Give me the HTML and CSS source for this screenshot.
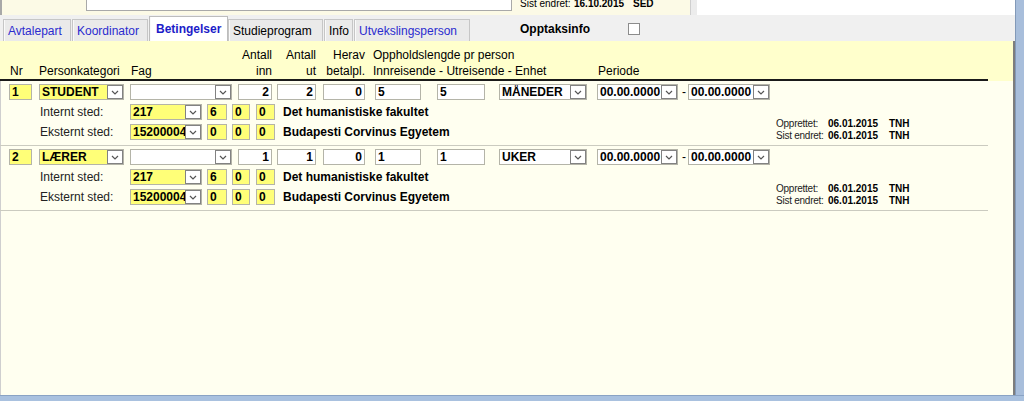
FILE: index.html
```html
<!DOCTYPE html>
<html lang="no">
<head>
<meta charset="utf-8">
<title>Betingelser</title>
<link rel="stylesheet" href="styles.css">
</head>
<body>
<div class="app">
  <div class="main">
    <div class="topstrip">
      <div class="ts-cream">
        <div class="ts-box"></div>
        <div class="ts-meta"><span class="tm-lbl">Sist endret:</span><b class="tm-dt">16.10.2015</b><b>SED</b></div>
      </div>
      <div class="ts-gap"></div>
      <div class="ts-white"></div>
    </div>

    <div class="tabbar">
      <div class="tabs">
        <div class="tab t1 link">Avtalepart</div>
        <div class="tab t2 link">Koordinator</div>
        <div class="tab t3 active">Betingelser</div>
        <div class="tab t4">Studieprogram</div>
        <div class="tab t5">Info</div>
        <div class="tab t6 link">Utvekslingsperson</div>
      </div>
      <div class="opptak"><b>Opptaksinfo</b><span class="chk"></span></div>
    </div>

    <div class="content">
      <div class="hdr">
        <div class="hdr-in">
          <div class="h h-nr">Nr</div>
          <div class="h h-pk">Personkategori</div>
          <div class="h h-fag">Fag</div>
          <div class="h h-inn">Antall<br>inn</div>
          <div class="h h-ut">Antall<br>ut</div>
          <div class="h h-her">Herav<br>betalpl.</div>
          <div class="h h-opp">Oppholdslengde pr person<br>Innreisende - Utreisende - Enhet</div>
          <div class="h h-per">Periode</div>
        </div>
      </div>

      <div class="row">
        <div class="line1">
          <div class="fld y c-nr">1</div>
          <div class="sel c-pk"><span class="val y">STUDENT</span><span class="btn"><svg width="8" height="5" viewBox="0 0 8 5"><polyline points="1,1 4,4 7,1" fill="none" stroke="#555" stroke-width="1.2"/></svg></span></div>
          <div class="sel c-fag"><span class="val"></span><span class="btn"><svg width="8" height="5" viewBox="0 0 8 5"><polyline points="1,1 4,4 7,1" fill="none" stroke="#555" stroke-width="1.2"/></svg></span></div>
          <div class="fld r c-inn">2</div>
          <div class="fld r c-ut">2</div>
          <div class="fld r c-her">0</div>
          <div class="fld c-ir">5</div>
          <div class="fld c-ur">5</div>
          <div class="sel c-enh"><span class="val">MÅNEDER</span><span class="btn"><svg width="8" height="5" viewBox="0 0 8 5"><polyline points="1,1 4,4 7,1" fill="none" stroke="#555" stroke-width="1.2"/></svg></span></div>
          <div class="sel c-per"><span class="val">00.00.0000</span><span class="btn"><svg width="8" height="5" viewBox="0 0 8 5"><polyline points="1,1 4,4 7,1" fill="none" stroke="#555" stroke-width="1.2"/></svg></span></div>
          <span class="dash">-</span>
          <div class="sel c-per2"><span class="val">00.00.0000</span><span class="btn"><svg width="8" height="5" viewBox="0 0 8 5"><polyline points="1,1 4,4 7,1" fill="none" stroke="#555" stroke-width="1.2"/></svg></span></div>
        </div>
        <div class="subarea">
          <div class="subs">
            <div class="subline">
              <span class="slbl">Internt sted:</span>
              <div class="sel c-sted"><span class="val y">217</span><span class="btn"><svg width="8" height="5" viewBox="0 0 8 5"><polyline points="1,1 4,4 7,1" fill="none" stroke="#555" stroke-width="1.2"/></svg></span></div>
              <div class="fld y c-s1">6</div>
              <div class="fld y c-s2">0</div>
              <div class="fld y c-s3">0</div>
              <span class="sname">Det humanistiske fakultet</span>
            </div>
            <div class="subline">
              <span class="slbl">Eksternt sted:</span>
              <div class="sel c-sted"><span class="val y">15200004</span><span class="btn"><svg width="8" height="5" viewBox="0 0 8 5"><polyline points="1,1 4,4 7,1" fill="none" stroke="#555" stroke-width="1.2"/></svg></span></div>
              <div class="fld y c-s1">0</div>
              <div class="fld y c-s2">0</div>
              <div class="fld y c-s3">0</div>
              <span class="sname">Budapesti Corvinus Egyetem</span>
            </div>
          </div>
          <div class="meta">
            <span class="m-lbl">Opprettet:</span><b class="m-dt">06.01.2015</b><b>TNH</b>
            <span class="m-lbl">Sist endret:</span><b class="m-dt">06.01.2015</b><b>TNH</b>
          </div>
        </div>
      </div>

      <div class="row">
        <div class="line1">
          <div class="fld y c-nr">2</div>
          <div class="sel c-pk"><span class="val y">LÆRER</span><span class="btn"><svg width="8" height="5" viewBox="0 0 8 5"><polyline points="1,1 4,4 7,1" fill="none" stroke="#555" stroke-width="1.2"/></svg></span></div>
          <div class="sel c-fag"><span class="val"></span><span class="btn"><svg width="8" height="5" viewBox="0 0 8 5"><polyline points="1,1 4,4 7,1" fill="none" stroke="#555" stroke-width="1.2"/></svg></span></div>
          <div class="fld r c-inn">1</div>
          <div class="fld r c-ut">1</div>
          <div class="fld r c-her">0</div>
          <div class="fld c-ir">1</div>
          <div class="fld c-ur">1</div>
          <div class="sel c-enh"><span class="val">UKER</span><span class="btn"><svg width="8" height="5" viewBox="0 0 8 5"><polyline points="1,1 4,4 7,1" fill="none" stroke="#555" stroke-width="1.2"/></svg></span></div>
          <div class="sel c-per"><span class="val">00.00.0000</span><span class="btn"><svg width="8" height="5" viewBox="0 0 8 5"><polyline points="1,1 4,4 7,1" fill="none" stroke="#555" stroke-width="1.2"/></svg></span></div>
          <span class="dash">-</span>
          <div class="sel c-per2"><span class="val">00.00.0000</span><span class="btn"><svg width="8" height="5" viewBox="0 0 8 5"><polyline points="1,1 4,4 7,1" fill="none" stroke="#555" stroke-width="1.2"/></svg></span></div>
        </div>
        <div class="subarea">
          <div class="subs">
            <div class="subline">
              <span class="slbl">Internt sted:</span>
              <div class="sel c-sted"><span class="val y">217</span><span class="btn"><svg width="8" height="5" viewBox="0 0 8 5"><polyline points="1,1 4,4 7,1" fill="none" stroke="#555" stroke-width="1.2"/></svg></span></div>
              <div class="fld y c-s1">6</div>
              <div class="fld y c-s2">0</div>
              <div class="fld y c-s3">0</div>
              <span class="sname">Det humanistiske fakultet</span>
            </div>
            <div class="subline">
              <span class="slbl">Eksternt sted:</span>
              <div class="sel c-sted"><span class="val y">15200004</span><span class="btn"><svg width="8" height="5" viewBox="0 0 8 5"><polyline points="1,1 4,4 7,1" fill="none" stroke="#555" stroke-width="1.2"/></svg></span></div>
              <div class="fld y c-s1">0</div>
              <div class="fld y c-s2">0</div>
              <div class="fld y c-s3">0</div>
              <span class="sname">Budapesti Corvinus Egyetem</span>
            </div>
          </div>
          <div class="meta">
            <span class="m-lbl">Opprettet:</span><b class="m-dt">06.01.2015</b><b>TNH</b>
            <span class="m-lbl">Sist endret:</span><b class="m-dt">06.01.2015</b><b>TNH</b>
          </div>
        </div>
      </div>
    </div>
  </div>
  <div class="rstrip"></div>
</div>
<div class="bstrip"></div>
</body>
</html>
```

FILE: styles.css
```css
* { box-sizing: border-box; }
html, body { margin: 0; padding: 0; }
body {
  width: 1024px;
  height: 401px;
  overflow: hidden;
  font-family: "Liberation Sans", Arial, sans-serif;
  font-size: 12px;
  color: #000;
  background: #fffff0;
}
.app { display: flex; height: 395px; }
.main { width: 1015px; display: flex; flex-direction: column; }
.rstrip {
  width: 9px;
  background: #a8bedb;
  border-left: 1px solid #8299b8;
}
.bstrip {
  height: 6px;
  background: #a9c1df;
  border-top: 1px solid #8aa3c4;
}

/* top strip */
.topstrip { height: 15px; display: flex; overflow: hidden; }
.ts-cream {
  width: 690px;
  background: #fcfae6;
  border-left: 2px solid #a8a8a8;
  display: flex;
  align-items: flex-start;
}
.ts-box {
  margin-left: 84px;
  width: 426px;
  height: 11px;
  background: #fff;
  border: 1px solid #a9a9a9;
  border-top: 0;
}
.ts-meta {
  margin-left: 8px;
  margin-top: -2px;
  font-size: 10px;
  line-height: 12px;
  display: flex;
}
.tm-lbl { width: 54px; }
.tm-dt { width: 59px; }
.ts-gap { width: 7px; background: #ececec; border-left: 1px solid #cfcfcf; }
.ts-white { flex: 1; background: #fff; }

/* tab bar */
.tabbar {
  height: 26px;
  background: #f0f0f0;
  display: flex;
  align-items: flex-end;
}
.tabs { display: flex; align-items: flex-end; margin-left: 3px; }
.tab {
  height: 22px;
  padding: 1px 0 0 4px;
  line-height: 20px;
  background: #eaeaea;
  border: 1px solid #c6c6c6;
  border-bottom: 0;
  box-shadow: inset 1px 0 #fafafa;
  white-space: nowrap;
}
.tab.link { color: #2b2bcf; }
.tab.active {
  height: 25px;
  padding-top: 2px;
  padding-left: 6px;
  background: #fff;
  border-color: #bdbdbd;
  color: #1c1cc8;
  font-weight: bold;
}
.t1 { width: 68px; margin-right: 1px; }
.t2 { width: 76px; margin-right: 1px; }
.t3 { width: 79px; }
.t4 { width: 95px; margin-right: 1px; }
.t5 { width: 29px; margin-right: 1px; }
.t6 { width: 116px; }
.opptak {
  align-self: center;
  margin-left: 50px;
  display: flex;
  align-items: center;
  margin-top: 1px;
}
.chk {
  margin-left: 38px;
  width: 12px;
  height: 12px;
  background: #fff;
  border: 1px solid #8c8c8c;
}

/* content */
.content {
  flex: 1;
  background: #fffff0;
  box-shadow: inset 1px 0 #cfcfcf, inset -2px 0 #7d7d7d;
}
.hdr { background: #ffffcc; padding-top: 4px; margin-right: 2px; }
.hdr-in {
  width: 988px;
  display: flex;
  align-items: flex-end;
  line-height: 16px;
  height: 36px;
  border-bottom: 2px solid #1a1a1a;
  white-space: nowrap;
}
.h-nr { margin-left: 10px; width: 29px; }
.h-pk { width: 92px; }
.h-fag { width: 101px; }
.h-inn { width: 40px; text-align: right; }
.h-ut { width: 44px; text-align: right; }
.h-her { width: 49px; text-align: right; }
.h-opp { margin-left: 8px; width: 225px; }

.row {
  width: 988px;
  padding: 3px 0 5px;
  border-bottom: 1px solid #cbcbc0;
}
.line1, .subline { display: flex; height: 16px; align-items: stretch; }
.subline { margin-top: 4px; }

.fld {
  height: 16px;
  border: 1px solid #b4b4a8;
  background: #fff;
  line-height: 14px;
  padding: 0 2px;
  font-weight: bold;
  white-space: nowrap;
}
.y { background: #ffff78; }
.r { text-align: right; }

.sel {
  display: flex;
  height: 16px;
  border: 1px solid #b4b4a8;
  background: #fff;
}
.sel .val {
  flex: 1;
  font-weight: bold;
  line-height: 14px;
  padding-left: 2px;
  white-space: nowrap;
  overflow: hidden;
}
.sel .btn {
  width: 16px;
  background: #fff;
  border: 1px solid #828282;
  display: flex;
  align-items: center;
  justify-content: center;
}
.sel .btn svg { display: block; }

.c-nr { margin-left: 9px; width: 23px; }
.c-pk { margin-left: 7px; width: 85px; }
.c-fag { margin-left: 6px; width: 102px; }
.c-inn { margin-left: 6px; width: 34px; }
.c-ut { margin-left: 5px; width: 39px; }
.c-her { margin-left: 7px; width: 42px; }
.c-ir { margin-left: 10px; width: 46px; }
.c-ur { margin-left: 16px; width: 48px; }
.c-enh { margin-left: 14px; width: 88px; }
.c-per { margin-left: 10px; width: 81px; }
.dash { margin-left: 4px; width: 6px; line-height: 16px; }
.c-per2 { width: 82px; }

.subarea { display: flex; }
.subs { width: 776px; }
.slbl { margin-left: 40px; width: 90px; line-height: 16px; color: #222; }
.c-sted { width: 72px; }
.c-s1 { margin-left: 5px; width: 20px; }
.c-s2 { margin-left: 5px; width: 18px; }
.c-s3 { margin-left: 6px; width: 19px; }
.sname { margin-left: 8px; font-weight: bold; line-height: 16px; white-space: nowrap; }

.meta {
  align-self: flex-end;
  margin-bottom: -2px;
  display: grid;
  grid-template-columns: 52px 61px auto;
  font-size: 10px;
  line-height: 12px;
  white-space: nowrap;
}
.m-lbl { color: #222; letter-spacing: -0.25px; }
```
